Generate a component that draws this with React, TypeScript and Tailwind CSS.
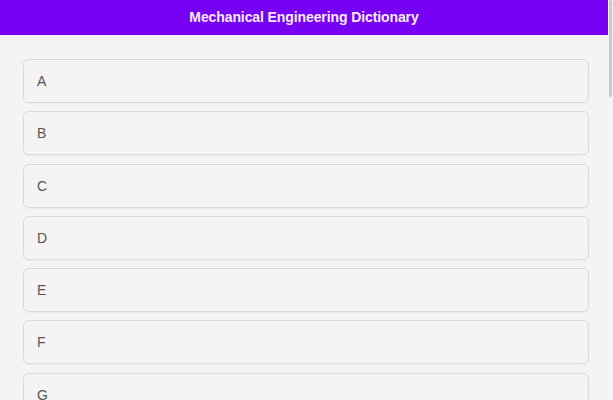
const letters = ["A", "B", "C", "D", "E", "F", "G", "H"];

export default function App() {
  return (
    <div className="relative flex h-[400px] w-[613px] overflow-hidden bg-[#f4f4f4] font-['Liberation_Sans',Arial,sans-serif]">
      <div className="flex w-[608px] flex-col">
        <header className="flex h-[35px] shrink-0 items-center justify-center bg-[#7700f4]">
          <h1 className="text-[14px] font-bold tracking-[-0.1px] text-[#f6ecff]">Mechanical Engineering Dictionary</h1>
        </header>
        <ul className="flex flex-col gap-[8.3px] pl-[23px] pr-[19px] pt-[24px]">
          {letters.map((l) => (
            <li
              key={l}
              className="flex h-[44px] shrink-0 items-center rounded-[5px] border border-[#dcdcdc] bg-[#f4f4f4] px-[13px] pt-[1px] text-[14px] text-[#555555] shadow-[0_1px_1px_rgba(0,0,0,0.04)]"
            >
              {l}
            </li>
          ))}
        </ul>
      </div>
      <div className="w-[5px] bg-[#f4f4f4]">
        <div className="ml-[1px] h-[97px] w-[3px] rounded-full bg-[#c9c9c9]" />
      </div>
    </div>
  );
}
